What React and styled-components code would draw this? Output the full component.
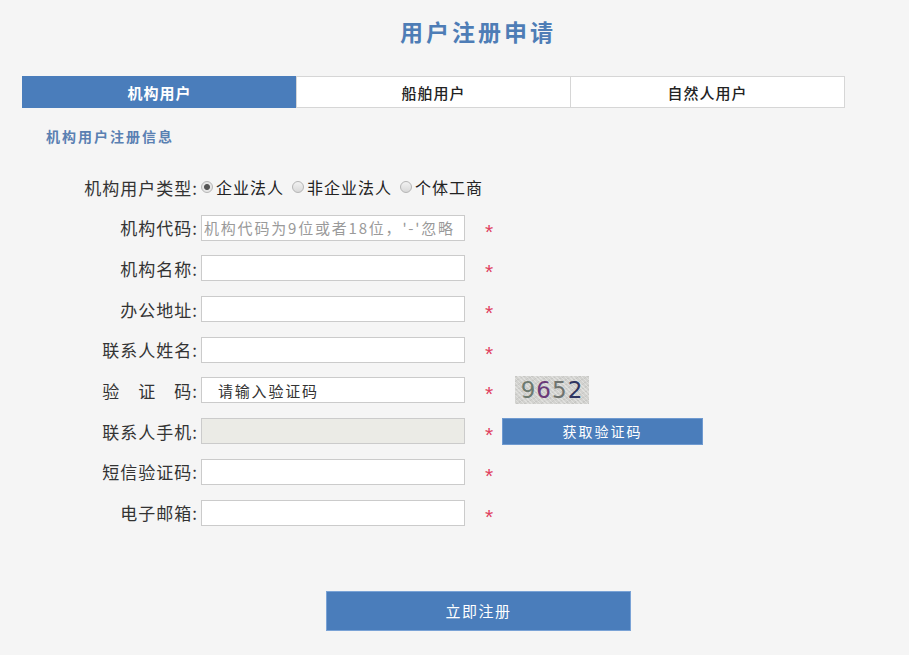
import React, { useState } from 'react';
import styled, { createGlobalStyle } from 'styled-components';

const GlobalStyle = createGlobalStyle`
  body {
    margin: 0;
    background-color: #f5f5f5;
    font-family: "Noto Sans CJK SC", "Liberation Sans", sans-serif;
    color: #333333;
  }
`;

const Page = styled.div`
  width: 823px;
  padding: 18px 0 0 22px;
  height: 637px;
`;

const Title = styled.h1`
  margin: 0;
  padding-left: 89px;
  text-align: center;
  font-size: 23px;
  line-height: 26px;
  letter-spacing: 3px;
  font-weight: 600;
  color: #4e7db6;
`;

const Tabs = styled.div`
  margin-top: 32px;
  display: grid;
  grid-template-columns: repeat(3, 1fr);
  height: 32px;
  border: 1px solid #d6d6d6;
  border-left: none;
  box-sizing: border-box;
  background-color: #ffffff;
`;

const Tab = styled.div`
  display: flex;
  align-items: center;
  justify-content: center;
  font-size: 15px;
  letter-spacing: 1px;
  font-weight: ${(p) => (p.$active ? 700 : 500)};
  color: ${(p) => (p.$active ? '#ffffff' : '#222222')};
  background-color: ${(p) => (p.$active ? '#4a7dbb' : '#ffffff')};
  border-left: 1px solid ${(p) => (p.$active ? '#4a7dbb' : '#d6d6d6')};
  margin-top: ${(p) => (p.$active ? '-1px' : '0')};
  margin-bottom: ${(p) => (p.$active ? '-1px' : '0')};
`;

const SubTitle = styled.h2`
  margin: 18px 0 0 0;
  padding-left: 24px;
  font-size: 14px;
  line-height: 20px;
  letter-spacing: 2px;
  font-weight: 700;
  color: #5a80b2;
`;

const Form = styled.div`
  margin-top: 28px;
  display: flex;
  flex-direction: column;
  gap: 14.7px;
`;

const Row = styled.div`
  display: flex;
  align-items: center;
  height: 26px;
`;

const Label = styled.label`
  width: 176px;
  text-align: right;
  font-size: 17px;
  letter-spacing: 1px;
  white-space: pre;
  color: #333333;
`;

const Options = styled.div`
  display: flex;
  align-items: center;
  margin-left: 3px;
  gap: 8px;
`;

const Option = styled.span`
  display: flex;
  align-items: center;
  font-size: 16px;
  letter-spacing: 1px;
  color: #222222;
  cursor: pointer;
`;

const RadioDot = styled.span`
  width: 12px;
  height: 12px;
  border-radius: 50%;
  border: 1px solid #b5b5b5;
  background: ${(p) =>
    p.$checked
      ? 'radial-gradient(circle, #555 0, #555 2.5px, #e6e6e6 3.5px)'
      : 'linear-gradient(#f2f2f2, #d9d9d9)'};
  margin-right: 3px;
  box-sizing: border-box;
`;

const Input = styled.input`
  margin-left: 3px;
  width: 264px;
  height: 26px;
  box-sizing: border-box;
  border: 1px solid #cbcbcb;
  background-color: ${(p) => (p.disabled ? '#ebebe6' : '#ffffff')};
  padding: 0 ${(p) => (p.$indent ? '16px' : '2px')};
  font-family: "Noto Sans CJK SC", "Liberation Sans", sans-serif;
  font-size: 15px;
  letter-spacing: 1.8px;
  color: #333333;
  outline: none;

  &::placeholder {
    color: #9a9a9a;
  }
`;

const Star = styled.span`
  margin-left: 20px;
  width: 12px;
  font-size: 21px;
  line-height: 21px;
  padding-top: 7px;
  color: #e0405e;
  font-family: "Liberation Sans", sans-serif;
`;

const Captcha = styled.div`
  margin-left: 18px;
  width: 74px;
  height: 28px;
  display: flex;
  align-items: center;
  justify-content: center;
  background-color: #d2d2cf;
  background-image: repeating-linear-gradient(45deg, rgba(255,255,255,0.3) 0 1px, transparent 1px 3px),
    repeating-linear-gradient(-30deg, rgba(0,0,0,0.05) 0 1px, transparent 1px 4px);
  font-family: "DejaVu Sans", sans-serif;
  font-size: 23px;
  letter-spacing: 1px;
`;

const Digit = styled.span`
  color: ${(p) => p.$color};
`;

const SmallButton = styled.button`
  margin-left: 5px;
  width: 201px;
  height: 27px;
  border: 1px solid #6f9ad0;
  background-color: #4a7dbb;
  color: #ffffff;
  font-family: "Noto Sans CJK SC", sans-serif;
  font-size: 14px;
  letter-spacing: 2px;
  cursor: pointer;
`;

const Submit = styled.button`
  margin: 65px 0 0 304px;
  width: 305px;
  height: 40px;
  border: 1px solid #7aa3d6;
  background-color: #4a7dbb;
  color: #ffffff;
  font-family: "Noto Sans CJK SC", sans-serif;
  font-size: 15px;
  letter-spacing: 1.5px;
  cursor: pointer;
`;

const tabs = ['机构用户', '船舶用户', '自然人用户'];
const types = ['企业法人', '非企业法人', '个体工商'];

const App = () => {
  const [tab, setTab] = useState(0);
  const [type, setType] = useState(0);

  return (
    <Page>
      <GlobalStyle />
      <Title>用户注册申请</Title>
      <Tabs>
        {tabs.map((t, i) => (
          <Tab key={t} $active={tab === i} onClick={() => setTab(i)}>{t}</Tab>
        ))}
      </Tabs>
      <SubTitle>机构用户注册信息</SubTitle>
      <Form>
        <Row>
          <Label>机构用户类型:</Label>
          <Options>
            {types.map((t, i) => (
              <Option key={t} onClick={() => setType(i)}>
                <RadioDot $checked={type === i} />
                {t}
              </Option>
            ))}
          </Options>
        </Row>
        <Row>
          <Label>机构代码:</Label>
          <Input placeholder="机构代码为9位或者18位，'-'忽略" />
          <Star>*</Star>
        </Row>
        <Row>
          <Label>机构名称:</Label>
          <Input />
          <Star>*</Star>
        </Row>
        <Row>
          <Label>办公地址:</Label>
          <Input />
          <Star>*</Star>
        </Row>
        <Row>
          <Label>联系人姓名:</Label>
          <Input />
          <Star>*</Star>
        </Row>
        <Row>
          <Label>{'验　证　码:'}</Label>
          <Input $indent defaultValue="请输入验证码" />
          <Star>*</Star>
          <Captcha>
            <Digit $color="#6d7a70">9</Digit>
            <Digit $color="#6a3a78">6</Digit>
            <Digit $color="#6f7470">5</Digit>
            <Digit $color="#2f3560">2</Digit>
          </Captcha>
        </Row>
        <Row>
          <Label>联系人手机:</Label>
          <Input disabled />
          <Star>*</Star>
          <SmallButton>获取验证码</SmallButton>
        </Row>
        <Row>
          <Label>短信验证码:</Label>
          <Input />
          <Star>*</Star>
        </Row>
        <Row>
          <Label>电子邮箱:</Label>
          <Input />
          <Star>*</Star>
        </Row>
      </Form>
      <Submit>立即注册</Submit>
    </Page>
  );
};

export default App;
